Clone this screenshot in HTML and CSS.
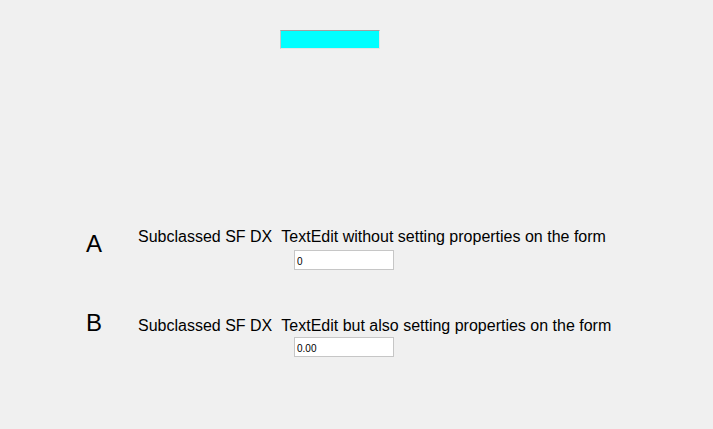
FILE: index.html
```html
<!DOCTYPE html>
<html lang="en">
<head>
  <meta charset="UTF-8">
  <title>Form1</title>
  <link rel="stylesheet" href="styles.css">
</head>
<body>

  <div class="banner"></div>

  <div class="row row-a">
    <div class="letter">A</div>
    <div class="field">
      <p class="caption"><span>Subclassed SF DX</span><span class="second">TextEdit without setting properties on the form</span></p>
      <input class="edit" type="text" value="0">
    </div>
  </div>

  <div class="row row-b">
    <div class="letter">B</div>
    <div class="field">
      <p class="caption"><span>Subclassed SF DX</span><span class="second">TextEdit but also setting properties on the form</span></p>
      <input class="edit" type="text" value="0.00">
    </div>
  </div>

</body>
</html>
```

FILE: styles.css
```css
body {
  font-family: "Liberation Sans", Arial, sans-serif;
  background-color: #f0f0f0;
  color: #000;
  margin: 0;
  padding: 0;
}

.banner {
  margin: 30px 0 0 280px;
  width: 100px;
  height: 19px;
  box-sizing: border-box;
  background-color: #00ffff;
  border: 1px solid;
  border-color: #a0a0a0 #e3e3e3 #e3e3e3 #c4c4c4;
}

.row {
  display: flex;
  padding-left: 86px;
}

.row-a {
  margin-top: 179px;
}

.row-b {
  margin-top: 39px;
}

.letter {
  width: 52px;
  font-size: 24px;
  line-height: 28px;
}

.row-a .letter {
  margin-top: 2px;
}

.row-b .field {
  margin-top: 8px;
}

.caption {
  margin: 0;
  font-size: 16px;
  line-height: 18px;
  white-space: nowrap;
}

.caption .second {
  margin-left: 9px;
}

.edit {
  display: block;
  margin: 4px 0 0 156px;
  width: 100px;
  height: 20px;
  box-sizing: border-box;
  padding: 3px 2px 0;
  border: 1px solid #c6c6c6;
  background: white;
  font-family: "Liberation Sans", Arial, sans-serif;
  font-size: 10px;
  color: #000;
  outline: none;
}

.row-b .edit {
  margin-top: 2px;
}
```
